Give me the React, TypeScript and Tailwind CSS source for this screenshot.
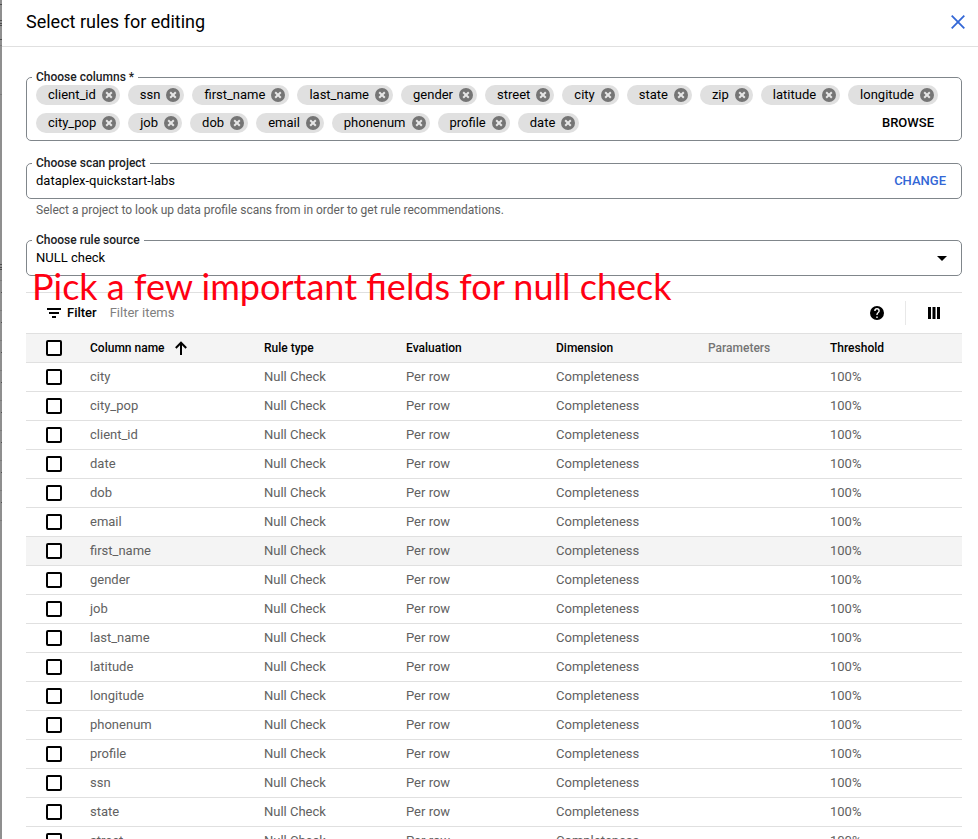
import React from "react";

const chips = [
  "client_id", "ssn", "first_name", "last_name", "gender", "street", "city", "state", "zip",
  "latitude", "longitude", "city_pop", "job", "dob", "email", "phonenum", "profile", "date",
];

const columns = [
  "city", "city_pop", "client_id", "date", "dob", "email", "first_name", "gender", "job",
  "last_name", "latitude", "longitude", "phonenum", "profile", "ssn", "state", "street",
];

const box =
  "block h-4 w-4 appearance-none rounded-xs border-2 border-black bg-white checked:bg-blue-600";
const field = "rounded-[5px] border border-[#80868b] px-[9px]";
const legend = "-ml-1 px-1 text-xs leading-4 font-medium text-[#202124]";

function Chip({ name }: { name: string }) {
  return (
    <li className="flex h-5 items-center gap-[6px] rounded-full bg-[#e0e0e0] pr-1 pl-3 text-[13px] text-black">
      {name}
      <button aria-label={`Remove ${name}`}>
        <svg className="block h-[14px] w-[14px]" viewBox="0 0 14 14">
          <circle cx="7" cy="7" r="7" fill="#757575" />
          <path d="M4.200 4.200l5.600 5.600M9.800 4.200l-5.600 5.600" stroke="#e6e6e6" strokeWidth="2" />
        </svg>
      </button>
    </li>
  );
}

/* Edge of the dimmed page that shows beside the panel */
function Backdrop() {
  return (
    <svg className="h-full w-[2px] shrink-0" aria-hidden="true">
      <g fill="#4d4d4d">
        {[4, 20, 23, 25, 39, 264, 267, 269].map((y) => (
          <rect key={y} x="0" y={y} width="2" height="1" />
        ))}
        {[0, 1, 2, 3, 4, 5, 6, 7].map((i) => (
          <rect key={i} x="1" y={292 + i * 30} width="1" height="1" />
        ))}
      </g>
      <g fill="#7b7b7b">
        {[45, 94, 280, 310, 340, 370, 400, 430, 460, 490, 520].map((y) => (
          <rect key={y} x="0" y={y} width="2" height="1" />
        ))}
      </g>
    </svg>
  );
}

export default function App() {
  return (
    <div className="flex h-screen overflow-hidden bg-[#8f8f8f] font-['Roboto',sans-serif]">
      <Backdrop />
      <main className="flex h-full min-w-0 flex-1 flex-col bg-white text-[13px] leading-5">
        <header className="flex h-[47px] shrink-0 items-center justify-between border-b border-[#e0e0e0] pr-[13px] pb-[2px] pl-6">
          <h1 className="text-lg text-black">Select rules for editing</h1>
          <button aria-label="Close">
            <svg className="block h-[14px] w-[14px]" viewBox="0 0 14 14">
              <path d="M.7.7l12.6 12.6M13.3.7L.7 13.3" stroke="#3367d6" strokeWidth="1.8" />
            </svg>
          </button>
        </header>

        <div className="min-h-0 flex-1 overflow-y-auto pt-[22px] pr-4 pl-6 [scrollbar-width:none]">
          <fieldset className={`${field} pb-[7px]`}>
            <legend className={legend}>Choose columns *</legend>
            <div className="flex items-end">
              <ul className="flex flex-1 flex-wrap gap-2">
                {chips.map((c) => (
                  <Chip key={c} name={c} />
                ))}
              </ul>
              <button className="-ml-14 pr-[18px] font-medium text-black">BROWSE</button>
            </div>
          </fieldset>

          <fieldset className={`${field} mt-[14px] pb-[7px]`}>
            <legend className={legend}>
              <label htmlFor="project">Choose scan project</label>
            </legend>
            <div className="flex items-center">
              <input
                id="project"
                className="min-w-0 flex-1 text-black outline-none"
                defaultValue="dataplex-quickstart-labs"
              />
              <button className="pr-[6px] font-medium text-[#3367d6]">CHANGE</button>
            </div>
          </fieldset>
          <p className="mt-[3px] px-[10px] text-xs leading-4 text-[#616161]">
            Select a project to look up data profile scans from in order to get rule recommendations.
          </p>

          <fieldset className={`${field} mt-[14px] pb-[7px]`}>
            <legend className={legend}>
              <label htmlFor="source">Choose rule source</label>
            </legend>
            <div className="flex items-center pr-[5px]">
              <select id="source" className="flex-1 appearance-none text-black outline-none">
                <option>NULL check</option>
              </select>
              <svg className="h-[5px] w-[10px]" viewBox="0 0 10 5">
                <path d="M0 0h10L5 5z" />
              </svg>
            </div>
          </fieldset>

          <div className="relative mt-4 flex h-[41px] items-center border-t border-[#e0e0e0]">
            <p className="absolute -top-[29px] left-[6px] font-['Lato',sans-serif] text-[36px] leading-[44px] whitespace-nowrap text-[#ff0012]">
              Pick a few important fields for null check
            </p>
            <svg className="ml-[21px] h-[10px] w-[14px]" viewBox="0 0 14 10">
              <path d="M0 0h14v2H0zM2 4h10v2H2zM5 8h4v2H5z" />
            </svg>
            <label htmlFor="filter" className="ml-[6px] font-medium text-black">Filter</label>
            <input
              id="filter"
              className="ml-[13px] min-w-0 flex-1 outline-none placeholder:text-[#808080]"
              placeholder="Filter items"
            />
            <button aria-label="Help">
              <svg className="block h-[14px] w-[14px]" viewBox="2 2 20 20">
                <path d="M12 2a10 10 0 100 20 10 10 0 000-20zm1 17h-2v-2h2v2zm2.07-7.75l-.9.92C13.45 12.9 13 13.5 13 15h-2v-.5c0-1.1.45-2.1 1.17-2.83l1.24-1.26c.37-.36.59-.86.59-1.41a2 2 0 00-4 0H8a4 4 0 118 0c0 .88-.36 1.68-.93 2.25z" />
              </svg>
            </button>
            <span className="mr-[22px] ml-[21px] h-6 border-l border-[#e8e8e8]" />
            <button aria-label="Column display options" className="mr-[22px]">
              <svg className="block h-3 w-3" viewBox="0 0 12 12">
                <path d="M0 0h3v12H0zM4.500 0h3v12h-3zM9 0h3v12H9z" />
              </svg>
            </button>
          </div>

          <table className="w-full table-fixed border-collapse text-left">
            <colgroup>
              <col className="w-16" />
              <col className="w-[174px]" />
              <col className="w-[142px]" />
              <col className="w-[150px]" />
              <col className="w-[152px]" />
              <col className="w-[122px]" />
              <col />
            </colgroup>
            <thead>
              <tr className="h-[29px] border-y border-[#e0e0e0] bg-[#f4f4f4] text-xs text-black [&>th]:p-0 [&>th]:font-medium">
                <th className="!pl-5"><input type="checkbox" aria-label="Select all rules" className={box} /></th>
                <th>
                  <button className="flex items-center gap-[10px]">
                    Column name
                    <svg className="h-[14px] w-3" viewBox="0 0 12 14" fill="none" stroke="black" strokeWidth="2">
                      <path d="M6 14V2M.8 7L6 1.700 11.200 7" />
                    </svg>
                  </button>
                </th>
                <th>Rule type</th>
                <th>Evaluation</th>
                <th>Dimension</th>
                <th className="text-[#757575]">Parameters</th>
                <th>Threshold</th>
              </tr>
            </thead>
            <tbody>
              {columns.map((c) => (
                <tr
                  key={c}
                  className={`h-[29px] border-b border-[#e0e0e0] text-[#616161] [&>td]:p-0 ${c === "first_name" ? "bg-[#f4f4f4]" : ""}`}
                >
                  <td className="!pl-5"><input type="checkbox" aria-label={`Select ${c}`} className={box} /></td>
                  <td>{c}</td>
                  <td>Null Check</td>
                  <td>Per row</td>
                  <td>Completeness</td>
                  <td></td>
                  <td>100%</td>
                </tr>
              ))}
            </tbody>
          </table>
        </div>
      </main>
    </div>
  );
}
